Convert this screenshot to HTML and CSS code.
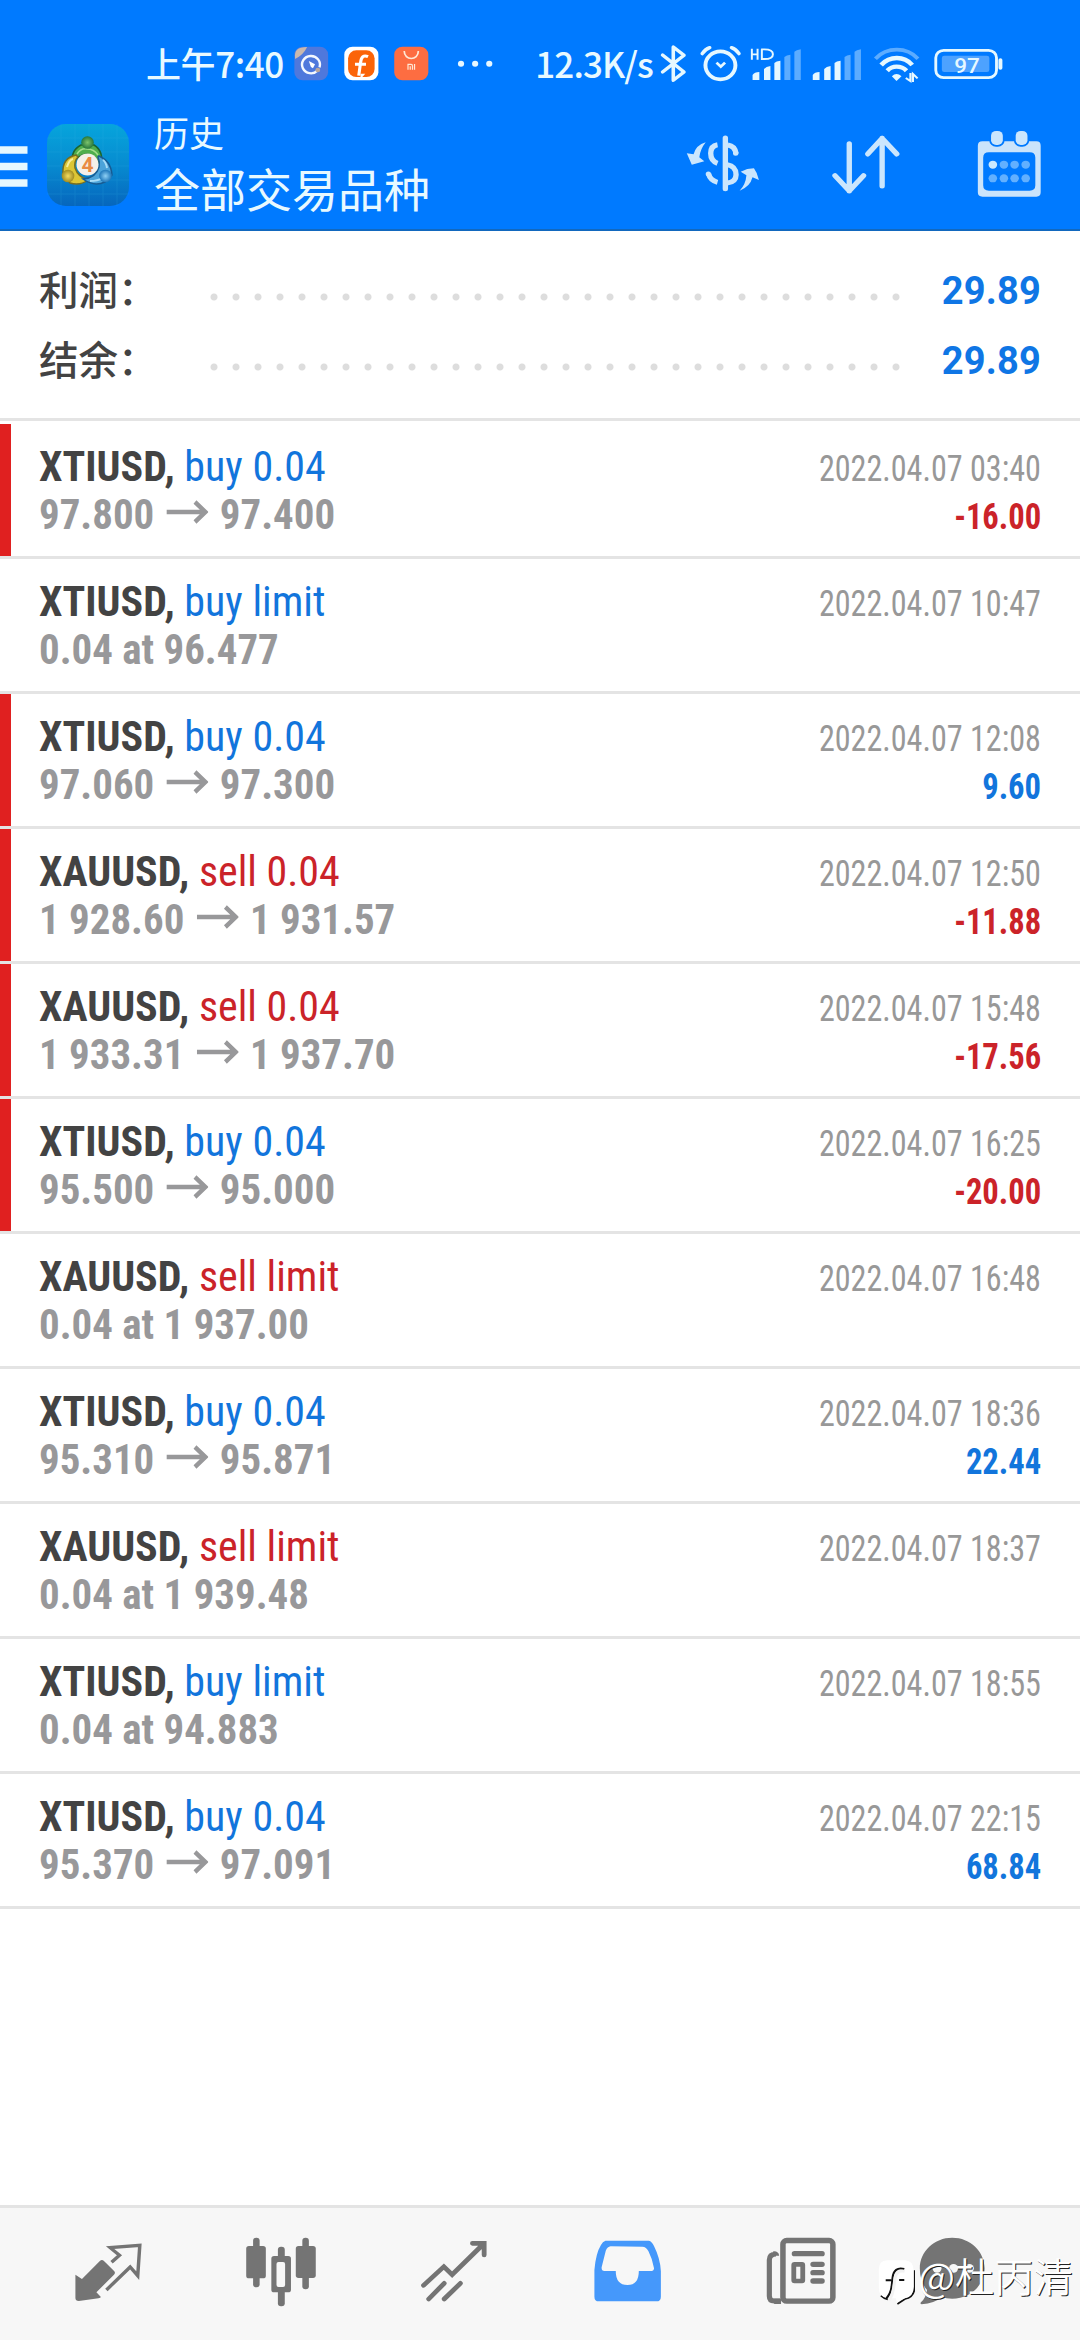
FILE: index.html
```html
<!DOCTYPE html>
<html lang="zh-CN">
<head>
<meta charset="utf-8">
<title>历史</title>
<link rel="stylesheet" href="styles.css">
</head>
<body>
<svg class="defs" aria-hidden="true">
  <symbol id="arrow" viewBox="0 0 44 24"><path d="M0 12H41M30 2L41 12L30 22" fill="none" stroke="currentColor" stroke-width="4.500"/></symbol>
</svg>
<div class="screen">
  <header class="header">
    <div class="status">
      <span class="clock">上午7:40</span>
      <svg class="apps" viewBox="850 130 600 124" preserveAspectRatio="none">
        <rect x="854" y="141" width="98" height="101" rx="24" fill="#4f78dc"/>
        <path d="M856 176C854 152 862 142 891 142C884 158 872 170 856 178Z" fill="#c9b8ae"/>
        <path d="M921 213A26 26 0 1 1 927 203" fill="none" stroke="#f4f8ff" stroke-width="7"/>
        <path d="M896 184L914 194L908 206L902 202Z" fill="#fff"/><circle cx="922" cy="211" r="7" fill="#b9a69d"/>
        <rect x="999" y="141" width="99" height="101" rx="24" fill="#fff"/>
        <rect x="1010" y="152" width="77" height="80" rx="24" fill="#fb6409"/>
        <path d="M1068 171Q1049 162 1046 190L1041 228M1030 194H1062" fill="none" stroke="#fff" stroke-width="9"/>
        <path d="M1046 222L1060 222L1046 238Z" fill="#fff"/>
        <rect x="1144" y="141" width="99" height="101" rx="24" fill="#fd6d41"/>
        <path d="M1173 154C1173 184 1214 184 1214 154" fill="none" stroke="#ffe9d6" stroke-width="5"/>
        <path d="M1184 210V194H1193Q1197 194 1197 199V210M1190.500 200V210M1203 193V210" fill="none" stroke="#ffe9d6" stroke-width="3.500"/>
        <g fill="#e8f8ff"><circle cx="1338" cy="192" r="9"/><circle cx="1379" cy="192" r="9"/><circle cx="1420" cy="192" r="9"/></g>
      </svg>
      <span class="speed">12.3K/s</span>
      <svg class="sys" viewBox="390 120 980 138" preserveAspectRatio="none" fill="none" stroke="#e6f8ff">
        <path d="M400 165L460 216L430 241V141L460 166L400 216" stroke-width="10" stroke-linejoin="round" stroke-linecap="round"/>
        <circle cx="562" cy="196" r="42" stroke-width="11"/>
        <path d="M551 188L563 200L575 188" stroke-width="8"/>
        <path d="M511 161Q519 148 532 143M614 161Q606 148 593 143" stroke-width="10" stroke-linecap="round"/>
        <path d="M650 146V179M666 146V179M650 163H666M678 148V177H685Q709 177 709 162.500Q709 148 685 148H676" stroke-width="5.500"/>
        <g id="bars" fill="#e6f8ff" stroke="none">
          <path d="M652 240V225Q657 216 671 216V240ZM684 240V207Q690 200 702 198V240ZM713 240V189Q718 183 730 182V240Z"/>
          <path d="M741 240V171Q747 165 758 164V240ZM769 240V155Q774 150 787 148V240Z" opacity=".4"/>
        </g>
        <use href="#bars" x="168.500"/>
        <path d="M996 176Q1020 149 1056 149Q1091 149 1115 176" stroke-width="11" opacity=".4"/>
        <path d="M1012 195Q1030 174 1056 174Q1082 174 1099 195M1029 212Q1040 200 1055 200Q1072 200 1083 212" stroke-width="13"/>
        <path d="M1042 229Q1055 215 1069 229L1055 243Z" fill="#e6f8ff" stroke="none"/>
        <path d="M1081 234L1094 243V219M1101 246V222L1114 235" stroke-width="6"/>
        <rect x="1165" y="151" width="170" height="82" rx="22" stroke-width="8"/>
        <rect x="1182" y="167" width="133" height="49" rx="7" fill="#4da2ff" stroke="none"/>
        <path d="M1346 180V204" stroke-width="11" stroke-linecap="round"/>
        <text x="1217" y="219" class="battery">97</text>
      </svg>
    </div>
    <div class="toolbar">
      <svg class="menu" viewBox="0 0 28 41"><path d="M0 4H27.500M0 20.500H27.500M0 37H27.500" stroke="#e6f8ff" stroke-width="7.500"/></svg>
      <svg class="logo" viewBox="0 0 82 82">
        <defs>
          <linearGradient id="lb" x1="0" y1="0" x2="0" y2="1"><stop offset="0" stop-color="#06a5dc"/><stop offset=".5" stop-color="#078bd0"/><stop offset="1" stop-color="#0666bd"/></linearGradient>
          <radialGradient id="gg"><stop offset="0" stop-color="#7cc36c"/><stop offset="1" stop-color="#26773b"/></radialGradient>
          <radialGradient id="gy"><stop offset="0" stop-color="#f4dd62"/><stop offset="1" stop-color="#a08b20"/></radialGradient>
          <radialGradient id="gb"><stop offset="0" stop-color="#8fd0f5"/><stop offset="1" stop-color="#1d76b9"/></radialGradient>
        </defs>
        <rect width="82" height="82" rx="19" fill="url(#lb)"/>
        <path d="M14 0V82M28 0V82M42 0V82M56 0V82M70 0V82M0 14H82M0 28H82M0 42H82M0 56H82M0 70H82" stroke="#35b4e6" stroke-width="1" opacity=".18"/>
        <g stroke-width="1.500">
          <path d="M26 39Q23 27 34 21L47 21Q57 27 54 42Q50 33 40 30Q31 31 26 39Z" fill="#4fae4d" stroke="#1c642d"/>
          <path d="M29 31Q15 34 16 49L23 59Q33 62 41 56Q31 53 28 44Q27 37 31 33Z" fill="#dcc635" stroke="#776e21"/>
          <path d="M52 32Q64 37 65 51L58 58Q47 63 36 55Q49 54 52 43Q53 38 51 33Z" fill="#4ba3d9" stroke="#185b92"/>
          <path d="M30 30Q34 24 40 25Q47 25 51 31" fill="none" stroke="#a4dc8b"/>
          <path d="M20 43Q22 36 26 35" fill="none" stroke="#f8ee9b" stroke-width="2"/>
          <path d="M60 44Q59 38 56 36M43 57Q51 57 55 54" fill="none" stroke="#a6dcf7" stroke-width="2"/>
        </g>
        <circle cx="40.500" cy="18.500" r="6.300" fill="url(#gg)"/><circle cx="21" cy="52" r="6.300" fill="url(#gy)"/><circle cx="58.500" cy="52" r="6.300" fill="url(#gb)"/>
        <circle cx="40.500" cy="40.500" r="11" fill="#f5f0e9"/><text x="34.500" y="48" class="four">4</text>
      </svg>
      <div class="titles"><div class="sub">历史</div><div class="title">全部交易品种</div></div>
      <svg class="tools" viewBox="460 380 1010 220" preserveAspectRatio="none" fill="none" stroke="#cbe6fd">
        <path d="M573 413V565" stroke-width="15" stroke-linecap="round"/>
        <path d="M551 433Q532 436 532 459Q532 482 551 489M580 434Q600 437 603 460M578 493Q603 498 603 523Q603 545 578 548M526 521Q531 541 551 546" stroke-width="15"/>
        <circle cx="602" cy="459" r="7.500" fill="#cbe6fd" stroke="none"/><circle cx="525.500" cy="521" r="7.500" fill="#cbe6fd" stroke="none"/>
        <path d="M518 426Q491 434 484 462L465 459L479 493L514 483L500 471Q503 446 518 426ZM613 571Q642 560 649 531L667 539Q663 518 653 504Q634 504 616 514L632 525Q630 553 613 571Z" fill="#cbe6fd" stroke="none"/>
        <path d="M920 430V572M880 526L920 572L960 526M1012 557V414M972 461L1012 414L1053 461" stroke-width="15" stroke-linecap="round" stroke-linejoin="round"/>
        <path d="M1293 423H1444Q1456 423 1456 436V576Q1456 589 1444 589H1293Q1280 589 1280 576V436Q1280 423 1293 423ZM1311 456Q1295 456 1295 472V555Q1295 571 1311 571H1425Q1441 571 1441 555V472Q1441 456 1425 456Z" fill="#cbe4fb" fill-rule="evenodd" stroke="none"/>
        <rect x="1317" y="392" width="33" height="42" rx="14" stroke="#007aff" stroke-width="10" fill="#cbe6fd" paint-order="stroke"/>
        <rect x="1386" y="392" width="33" height="42" rx="14" stroke="#007aff" stroke-width="10" fill="#cbe6fd" paint-order="stroke"/>
        <g fill="#62b0ff" stroke="none"><circle cx="1322" cy="493" r="12" fill="#cbe9ff"/><circle cx="1353" cy="493" r="12"/><circle cx="1383" cy="493" r="12"/><circle cx="1414" cy="493" r="12"/><circle cx="1322" cy="534" r="12"/><circle cx="1353" cy="534" r="12"/><circle cx="1383" cy="534" r="12"/><circle cx="1414" cy="534" r="12"/></g>
      </svg>
    </div>
  </header>

  <section class="summary">
    <div class="sum"><span class="label">利润：</span><i class="dots"></i><b>29.89</b></div>
    <div class="sum"><span class="label">结余：</span><i class="dots"></i><b>29.89</b></div>
  </section>

  <main class="list">
    <article class="row mark"><div class="line"><span><b>XTIUSD,</b> <em class="buy">buy 0.04</em></span><time>2022.04.07 03:40</time></div><div class="line price"><span>97.800<svg><use href="#arrow"/></svg>97.400</span><strong class="loss">-16.00</strong></div></article>
    <article class="row"><div class="line"><span><b>XTIUSD,</b> <em class="buy">buy limit</em></span><time>2022.04.07 10:47</time></div><div class="line price"><span>0.04 at 96.477</span></div></article>
    <article class="row mark"><div class="line"><span><b>XTIUSD,</b> <em class="buy">buy 0.04</em></span><time>2022.04.07 12:08</time></div><div class="line price"><span>97.060<svg><use href="#arrow"/></svg>97.300</span><strong class="gain">9.60</strong></div></article>
    <article class="row mark"><div class="line"><span><b>XAUUSD,</b> <em class="sell">sell 0.04</em></span><time>2022.04.07 12:50</time></div><div class="line price"><span>1 928.60<svg><use href="#arrow"/></svg>1 931.57</span><strong class="loss">-11.88</strong></div></article>
    <article class="row mark"><div class="line"><span><b>XAUUSD,</b> <em class="sell">sell 0.04</em></span><time>2022.04.07 15:48</time></div><div class="line price"><span>1 933.31<svg><use href="#arrow"/></svg>1 937.70</span><strong class="loss">-17.56</strong></div></article>
    <article class="row mark"><div class="line"><span><b>XTIUSD,</b> <em class="buy">buy 0.04</em></span><time>2022.04.07 16:25</time></div><div class="line price"><span>95.500<svg><use href="#arrow"/></svg>95.000</span><strong class="loss">-20.00</strong></div></article>
    <article class="row"><div class="line"><span><b>XAUUSD,</b> <em class="sell">sell limit</em></span><time>2022.04.07 16:48</time></div><div class="line price"><span>0.04 at 1 937.00</span></div></article>
    <article class="row"><div class="line"><span><b>XTIUSD,</b> <em class="buy">buy 0.04</em></span><time>2022.04.07 18:36</time></div><div class="line price"><span>95.310<svg><use href="#arrow"/></svg>95.871</span><strong class="gain">22.44</strong></div></article>
    <article class="row"><div class="line"><span><b>XAUUSD,</b> <em class="sell">sell limit</em></span><time>2022.04.07 18:37</time></div><div class="line price"><span>0.04 at 1 939.48</span></div></article>
    <article class="row"><div class="line"><span><b>XTIUSD,</b> <em class="buy">buy limit</em></span><time>2022.04.07 18:55</time></div><div class="line price"><span>0.04 at 94.883</span></div></article>
    <article class="row"><div class="line"><span><b>XTIUSD,</b> <em class="buy">buy 0.04</em></span><time>2022.04.07 22:15</time></div><div class="line price"><span>95.370<svg><use href="#arrow"/></svg>97.091</span><strong class="gain">68.84</strong></div></article>
  </main>

  <nav class="nav">
    <svg viewBox="63.900 54 502.400 396" preserveAspectRatio="none">
      <path d="M219 254L238 267L290 213Q296 207 302 213L332 244Q336 249 331 254L280 307L293 321Q292 324 286 325L229 333Q219 333 219 324Z" fill="#747474"/>
      <path d="M324 217L347 196L320 173L406 166L400 257L378 231L309 300" fill="none" stroke="#747474" stroke-width="10"/>
    </svg>
    <svg viewBox="566.300 54 502.400 396" preserveAspectRatio="none" fill="#747474">
      <rect x="735" y="143" width="19" height="149" rx="9"/><rect x="715" y="168" width="57" height="97" rx="8"/>
      <rect x="878" y="143" width="19" height="155" rx="9"/><rect x="859" y="168" width="58" height="96" rx="8"/>
      <rect x="807" y="170" width="20" height="179" rx="9"/><rect x="788" y="198" width="57" height="109" rx="8"/><rect x="803" y="216" width="25" height="75" rx="6" fill="#f7f7f7"/>
    </svg>
    <svg viewBox="1068.700 54 502.400 396" preserveAspectRatio="none" fill="none" stroke="#747474" stroke-width="14" stroke-linejoin="miter" stroke-linecap="round">
      <path d="M1230 286L1289 230L1313 254L1404 162M1372 160H1406V195M1245 327L1290 280M1290 327L1337 280"/>
    </svg>
    <svg viewBox="2.900 54 502.400 396" preserveAspectRatio="none" fill="#4598fb">
      <path d="M190 152H316Q325 154 331 168Q349 205 351 243V320Q351 334 338 334H171Q158 334 158 320V240Q162 190 177 165Q182 154 190 152ZM205 169Q196 170 191 182L179 232Q178 243 187 243H220Q220 285 254 285Q287 285 287 243H320Q332 243 331 234Q326 206 315 184Q309 170 297 170Z" fill-rule="evenodd"/>
    </svg>
    <svg viewBox="505.300 54 502.400 396" preserveAspectRatio="none" fill="none" stroke="#747474" stroke-width="15">
      <path d="M698 333H680Q666 333 666 318V210Q666 193 685 192M678 192Q687 190 687 197" />
      <path d="M680 334H700" stroke-width="16"/>
      <rect x="705.500" y="151.500" width="145" height="182" rx="11" stroke-width="16"/>
      <path d="M739 191H819M793 223H819M793 248H819M793 273H819" stroke-width="16" stroke-linecap="round"/>
      <rect x="737" y="223" width="26" height="50" rx="2" stroke-width="14"/>
    </svg>
    <svg viewBox="1007.700 54 502.400 396" preserveAspectRatio="none">
      <path d="M1197 143C1250 143 1291 184 1291 235C1291 286 1250 326 1197 326Q1180 326 1167 321Q1146 340 1108 343Q1102 341 1107 336Q1120 325 1124 300Q1103 275 1103 235C1103 184 1145 143 1197 143Z" fill="#747474"/>
      <g fill="#f7f7f7"><circle cx="1153" cy="235" r="13"/><circle cx="1201" cy="235" r="13"/><circle cx="1247" cy="235" r="13"/></g>
    </svg>
  </nav>
  <div class="watermark">
    <svg viewBox="970 200 120 150" preserveAspectRatio="none" fill="none">
      <path d="M1088 240V290Q1088 320 1060 326L1038 341M990 316Q1000 326 1010 327" stroke="#111" stroke-width="5"/>
      <path d="M1008 210H1060Q1085 212 1085 240V288Q1085 320 1060 324Q1049 327 1036 338L1034 324H1010Q984 320 984 292V236Q984 212 1008 210Z" fill="#fff"/>
      <path d="M1058 236Q1028 228 1024 262L1021 290Q1018 310 1006 324M1004 270H1020M1043 269H1058" stroke="#111" stroke-width="6"/>
      <path d="M1059 243Q1035 238 1031 264L1027 294Q1024 314 1014 331" stroke="#f3f3f3" stroke-width="9"/>
    </svg>
    <span>@杜丙清</span>
  </div>
</div>
</body>
</html>
```
FILE: styles.css
```css
* { box-sizing: border-box; }
body { margin: 0; background: #fff; }
.defs { display: none; }
svg { display: block; flex: none; }
.screen {
  position: relative;
  width: 1080px;
  height: 2340px;
  display: flex;
  flex-direction: column;
  overflow: hidden;
  font-family: Roboto, "Noto Sans CJK SC", sans-serif;
}

.header { height: 231px; background: #007aff; border-bottom: 2px solid #1268be; color: #e8f9ff; }
.status {
  height: 107px;
  padding: 38px 0 0 146px;
  display: flex;
  align-items: flex-start;
  font: 500 35px/52px "Noto Sans CJK SC", sans-serif;
  white-space: nowrap;
}
.clock { width: 146.700px; letter-spacing: -.4px; margin-top: -1px; }
.apps { width: 206.600px; height: 41.300px; margin-top: 5.300px; }
.speed { width: 122px; margin: -1px 0 0 36px; letter-spacing: -.9px; }
.sys { width: 350px; height: 46px; margin-top: 2px; margin-left: 2px; }
.battery { font: 500 63px Roboto, sans-serif; fill: #e6f8ff; stroke: none; }

.toolbar { height: 122px; display: flex; align-items: flex-start; }
.menu { width: 28px; height: 41px; margin-top: 39px; }
.logo { width: 82px; height: 82px; margin: 17px 0 0 19px; }
.four { font: 700 21px Roboto, sans-serif; fill: #e98b43; }
.titles { margin-left: 25px; width: 531px; font-family: "Noto Sans CJK SC", sans-serif; }
.sub { font-size: 35px; line-height: 50px; }
.title { font-size: 46px; line-height: 60px; }
.tools { width: 360.700px; height: 73.300px; margin-top: 19.700px; }

.summary { height: 190px; padding: 24px 39px 0; border-bottom: 3px solid #e4e4e4; }
.sum { height: 70px; display: flex; align-items: center; }
.label { width: 164px; padding-bottom: 5px; font: 500 39.500px/65px "Noto Sans CJK SC", sans-serif; color: #434343; }
.dots {
  width: 704px;
  height: 8px;
  margin: 13px 0 0 -.500px;
  background: radial-gradient(circle at 11px 4px, #ddd 3px, transparent 4px) 0 0 / 22px 8px;
}
.sum b { margin: 2px 0 0 auto; font-size: 38px; letter-spacing: .2px; color: #0f76e5; }

.list { padding-top: 3px; flex: 1; }
.row { height: 135px; padding: 18px 39px 0; border-bottom: 3px solid #e4e4e4; }
.mark { background: linear-gradient(#e02020, #e02020) 0 0 / 11px 132px no-repeat; }
.line {
  height: 48px;
  display: flex;
  justify-content: space-between;
  align-items: baseline;
  font-family: "Roboto Condensed", Roboto, sans-serif;
  font-stretch: 75%;
  font-size: 43px;
  line-height: 48px;
  color: #434343;
  white-space: nowrap;
}
.line span { transform: scaleX(.976); transform-origin: left; }
.line em { font-style: normal; }
.buy, .gain { color: #1275dc; }
.sell, .loss { color: #cb2329; }
.line time { font-size: 36px; color: #989898; transform: scaleX(.892); transform-origin: right; }
.price span { color: #98989a; font-weight: 700; transform: scaleX(.951); }
.price svg { display: inline-block; width: 44px; height: 24px; margin: 0 12px 0 13px; vertical-align: 5px; }
.price strong { font-size: 36px; transform: scaleX(.905); transform-origin: right; }

.nav { height: 135px; flex: none; padding-left: 22px; display: flex; background: #f7f7f7; border-top: 3px solid #e4e4e4; }
.nav svg { width: 173px; height: 132px; }

.watermark {
  position: absolute;
  left: 874px;
  top: 2254px;
  display: flex;
  color: #fff;
  font: 350 39.300px/50px "Noto Sans CJK SC", sans-serif;
  text-shadow: 1px 1px 0 #222;
}
.watermark svg { width: 41.300px; height: 50px; margin: 3px 3px 0 0; }
.watermark span { margin-top: -4px; }
```
